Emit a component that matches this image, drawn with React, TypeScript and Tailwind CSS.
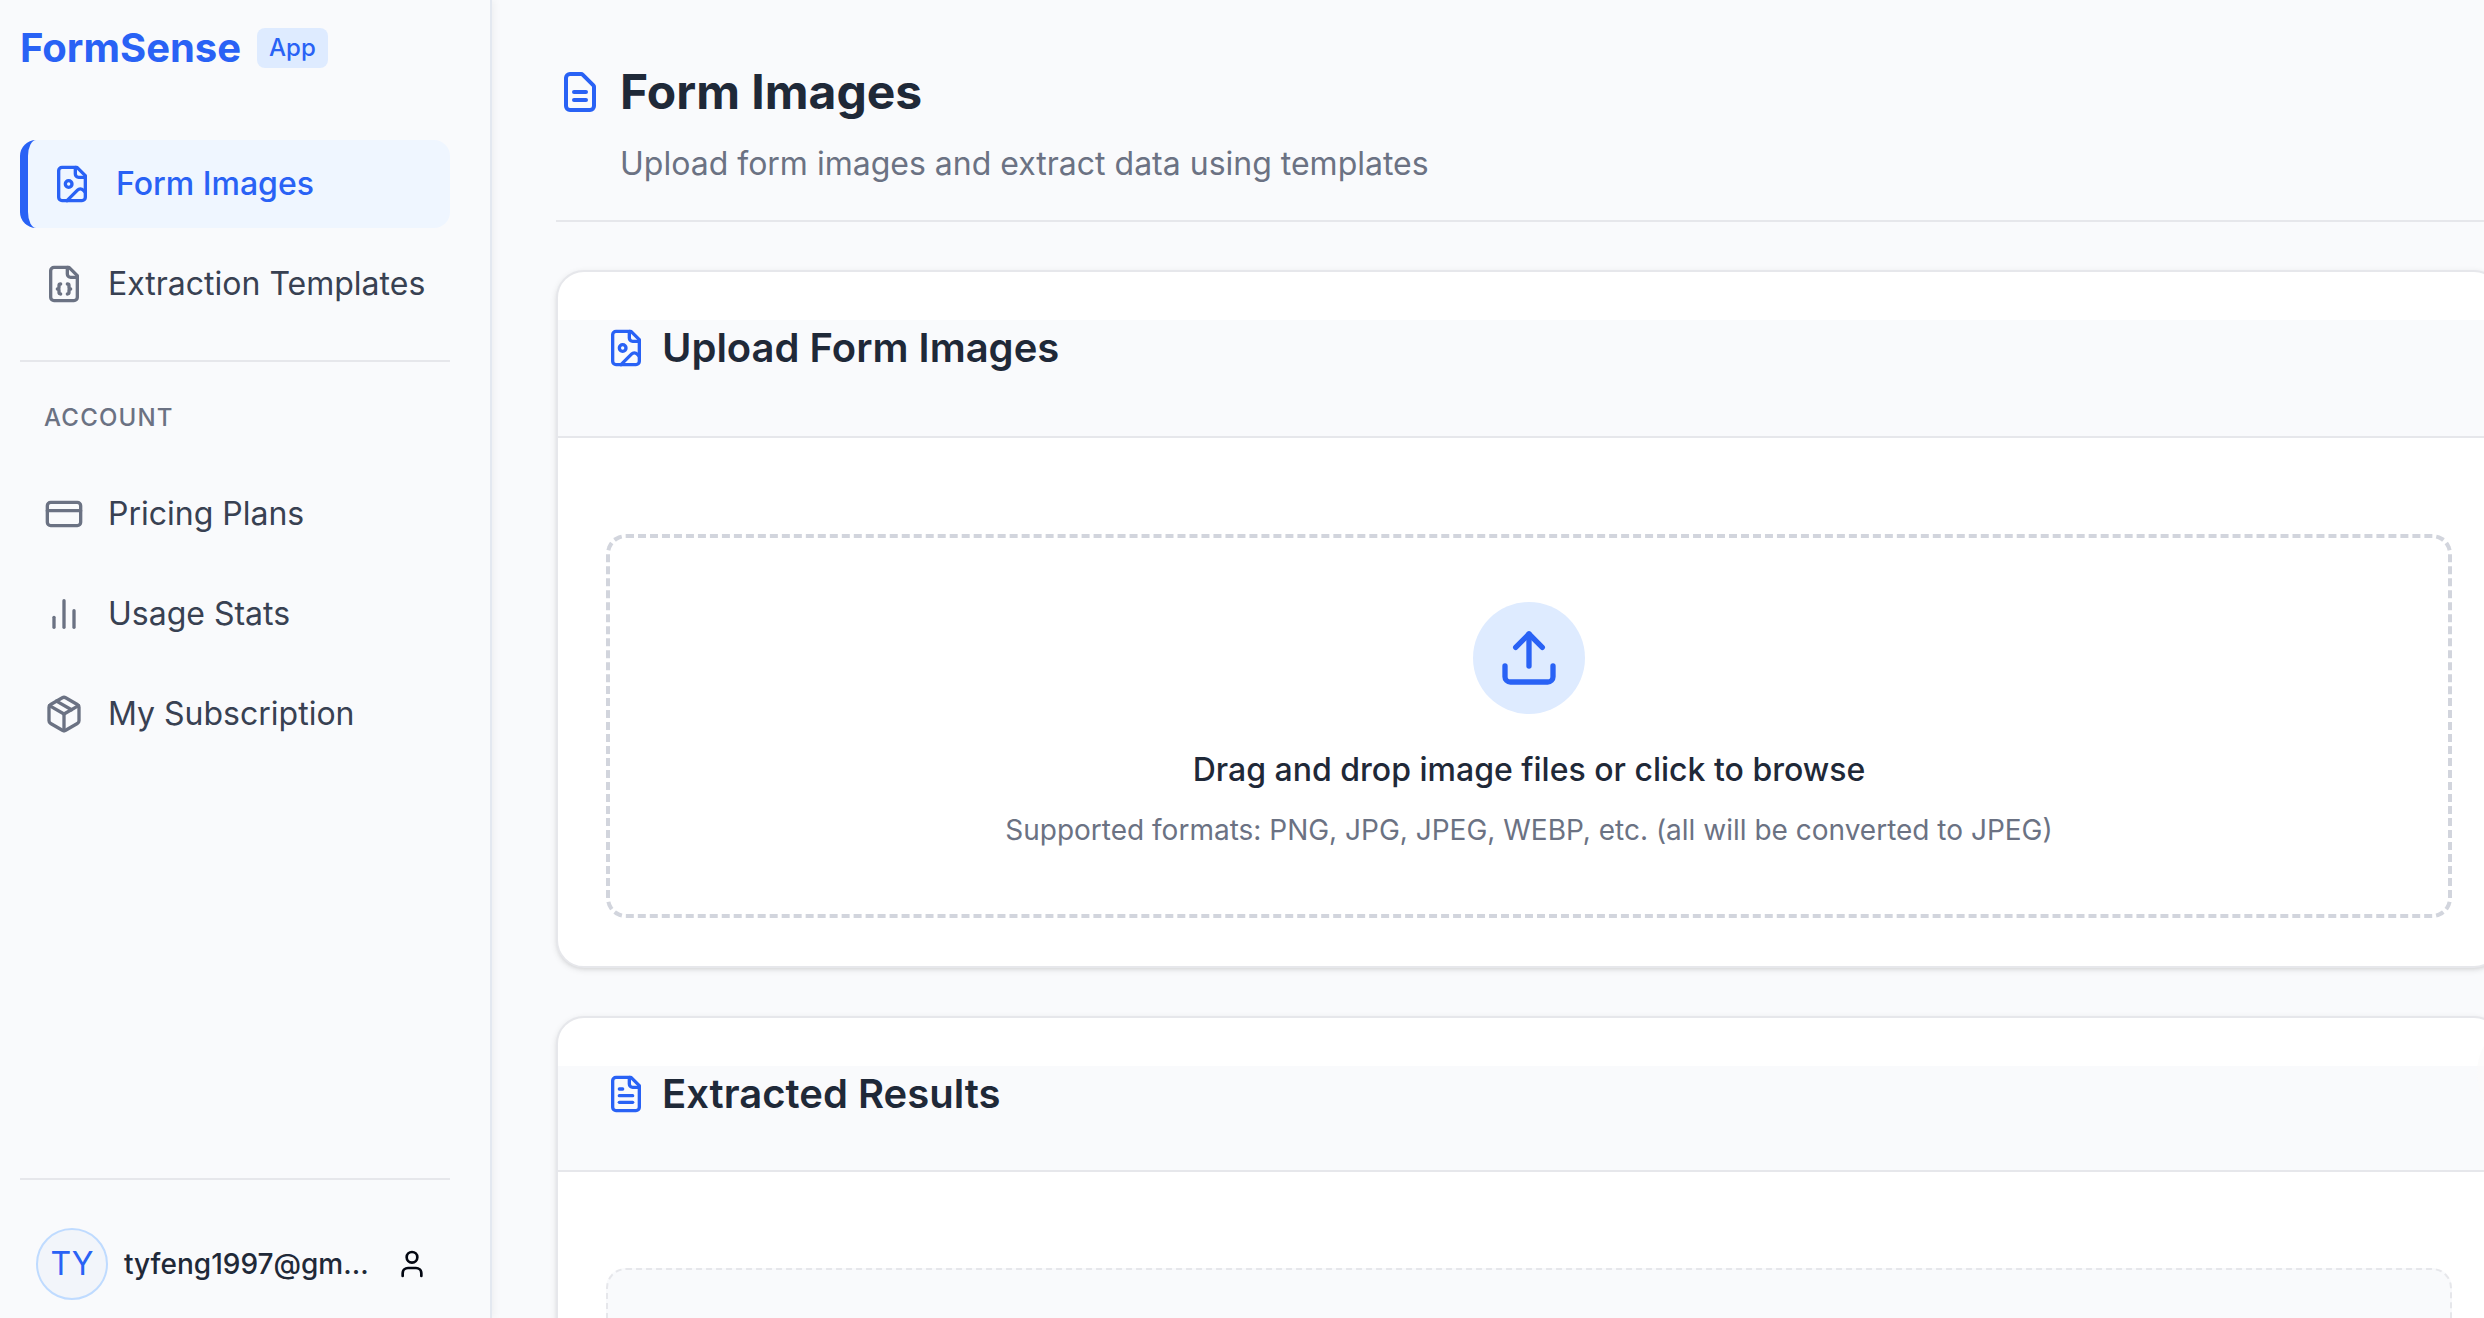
import type { ComponentType, ReactNode } from 'react';
import { CreditCard, Package, Upload, User } from 'lucide-react';

type IconProps = { className?: string };

function Stroke({ className, children }: { className?: string; children: ReactNode }) {
  return (
    <svg viewBox="0 0 24 24" fill="none" stroke="currentColor" strokeWidth="2" strokeLinecap="round" strokeLinejoin="round" className={className}>
      {children}
    </svg>
  );
}

const SHEET = 'M15 2H6a2 2 0 0 0-2 2v16a2 2 0 0 0 2 2h12a2 2 0 0 0 2-2V7Z';
const FOLD = 'M14 2v4a2 2 0 0 0 2 2h4';

function ImageFile({ className }: IconProps) {
  return (
    <Stroke className={className}>
      <path d={SHEET} />
      <path d={FOLD} />
      <circle cx="10" cy="12" r="2" />
      <path d="m20 17-1.296-1.296a2.41 2.41 0 0 0-3.408 0L9 22" />
    </Stroke>
  );
}

function JsonFile({ className }: IconProps) {
  return (
    <Stroke className={className}>
      <path d={SHEET} />
      <path d={FOLD} />
      <path d="M10 12a1 1 0 0 0-1 1v1a1 1 0 0 1-1 1 1 1 0 0 1 1 1v1a1 1 0 0 0 1 1" />
      <path d="M14 18a1 1 0 0 0 1-1v-1a1 1 0 0 1 1-1 1 1 0 0 1-1-1v-1a1 1 0 0 0-1-1" />
    </Stroke>
  );
}

function TextFile({ className }: IconProps) {
  return (
    <Stroke className={className}>
      <path d={SHEET} />
      <path d={FOLD} />
      <path d="M10 9H8" />
      <path d="M16 13H8" />
      <path d="M16 17H8" />
    </Stroke>
  );
}

function Bars({ className }: IconProps) {
  return (
    <Stroke className={className}>
      <path d="M18 20V10" />
      <path d="M12 20V4" />
      <path d="M6 20v-6" />
    </Stroke>
  );
}

function PageIcon({ className }: IconProps) {
  return (
    <Stroke className={className}>
      <path d="M9 12h6m-6 4h6m2 5H7a2 2 0 01-2-2V5a2 2 0 012-2h5.586a1 1 0 01.707.293l5.414 5.414a1 1 0 01.293.707V19a2 2 0 01-2 2z" />
    </Stroke>
  );
}

function NavItem({ icon: Icon, label, active }: { icon: ComponentType<IconProps>; label: string; active?: boolean }) {
  return (
    <a
      className={
        active
          ? 'flex h-[88px] items-center gap-6 rounded-2xl border-l-8 border-[#2962f5] bg-[#eff6ff] px-6 font-medium text-[#2962f5]'
          : 'flex h-[88px] items-center gap-6 rounded-2xl px-6 text-[#384152]'
      }
    >
      <Icon className={active ? 'size-10 shrink-0' : 'size-10 shrink-0 text-[#6b7283]'} />
      <span className="whitespace-nowrap text-[32px] leading-[48px]">{label}</span>
    </a>
  );
}

function Sidebar() {
  return (
    <aside className="relative z-10 flex w-[492px] shrink-0 flex-col border-r-2 border-[#e3e8f0] bg-[#f9fafc] pl-5 pr-10 shadow-[2px_0_8px_rgba(0,0,0,0.05)]">
      <div className="flex h-[96px] shrink-0 items-center gap-4">
        <span className="text-[40px] font-bold leading-[56px] text-[#2962f5]">FormSense</span>
        <span className="rounded-lg bg-[#deebff] px-3 py-1 text-2xl font-medium text-[#2962f5]">App</span>
      </div>
      <nav className="mt-11 flex flex-col gap-3">
        <NavItem icon={ImageFile} label="Form Images" active />
        <NavItem icon={JsonFile} label="Extraction Templates" />
      </nav>
      <div className="mt-8 border-t-2 border-[#e6e7eb] pt-10">
        <h3 className="px-6 text-2xl font-medium tracking-[0.05em] text-[#6b7283]">ACCOUNT</h3>
        <nav className="mt-9 flex flex-col gap-3">
          <NavItem icon={CreditCard} label="Pricing Plans" />
          <NavItem icon={Bars} label="Usage Stats" />
          <NavItem icon={Package} label="My Subscription" />
        </nav>
      </div>
      <div className="mt-auto h-[140px] border-t-2 border-[#e6e7eb] px-4 pt-12">
        <div className="flex items-center">
          <div className="flex size-[72px] shrink-0 items-center justify-center rounded-full border-2 border-[#bfdbff] bg-[#f2f5fa] text-[32px] text-[#2962f5]">TY</div>
          <span className="ml-4 w-[248px] whitespace-nowrap text-[28px] font-medium leading-10 text-[#1f2938]">tyfeng1997@gm...</span>
          <User className="ml-6 size-8 shrink-0 text-[#030712]" />
        </div>
      </div>
    </aside>
  );
}

function Card({ icon: Icon, title, className, headClass, children }: { icon: ComponentType<IconProps>; title: string; className: string; headClass: string; children: ReactNode }) {
  return (
    <section className={`${className} w-[1946px] overflow-hidden rounded-[28px] border-2 border-[#e6e7eb] bg-white pt-12 shadow-[0_2px_6px_rgba(0,0,0,0.1),0_2px_4px_-2px_rgba(0,0,0,0.1)]`}>
      <header className={`${headClass} border-b-2 border-[#e6e7eb] bg-[#f9fafc] px-12`}>
        <h2 className="flex h-14 items-center gap-4 text-[40px] font-semibold text-[#1f2938]">
          <Icon className="size-10 shrink-0 text-[#2962f5]" />
          <span>{title}</span>
        </h2>
      </header>
      {children}
    </section>
  );
}

export default function App() {
  return (
    <div className="relative flex h-[1318px] w-full overflow-hidden bg-[#f9fafc] font-['Inter',sans-serif]">
      <Sidebar />
      <main className="min-w-0 flex-1 overflow-hidden pl-16 pt-[60px]">
        <header className="h-[162px] w-[1946px] border-b-2 border-[#e6e7eb]">
          <div className="flex h-16 items-center gap-4">
            <PageIcon className="size-12 text-[#2962f5]" />
            <h1 className="text-[48px] font-bold leading-[64px] text-[#1f2938]">Form Images</h1>
          </div>
          <p className="ml-16 mt-4 text-[32px] leading-[48px] text-[#6b7283]">Upload form images and extract data using templates</p>
        </header>
        <Card icon={ImageFile} title="Upload Form Images" className="mt-12 h-[698px]" headClass="h-[118px]">
          <div className="px-12 pt-24">
            <div className="flex h-[384px] w-[1846px] flex-col items-center rounded-[20px] border-4 border-dashed border-[#d2d5dd] pt-16">
              <div className="flex size-28 items-center justify-center rounded-full bg-[#deebff]">
                <Upload className="size-16 text-[#2962f5]" />
              </div>
              <p className="mt-8 text-[32px] font-medium leading-[48px] text-[#1f2938]">Drag and drop image files or click to browse</p>
              <p className="mt-4 text-[28px] leading-10 text-[#6b7283]">Supported formats: PNG, JPG, JPEG, WEBP, etc. (all will be converted to JPEG)</p>
            </div>
          </div>
        </Card>
        <Card icon={TextFile} title="Extracted Results" className="mt-12 h-[600px]" headClass="h-[106px]">
          <div className="px-12 pt-24">
            <div className="h-[300px] w-[1846px] rounded-[20px] border-2 border-dashed border-[#e6e7eb] bg-[#f9fafc]" />
          </div>
        </Card>
      </main>
      {/* Floating handle that peeks in from the right edge */}
      <div className="absolute -right-[105px] top-[1017px] size-28 rounded-full bg-[#fafafa]/60" />
    </div>
  );
}
